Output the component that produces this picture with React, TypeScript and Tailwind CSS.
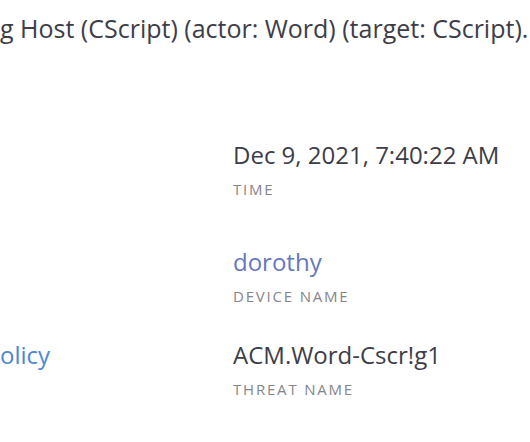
import React from "react";

const font = { fontFamily: '"Open Sans", "Noto Sans", sans-serif' };

function Field({ value, label, link }: { value: string; label: string; link?: boolean }) {
  return (
    <div className="flex flex-col">
      <div className={`text-[24px] leading-[30px] whitespace-nowrap ${link ? "text-[#6478c0]" : "text-[#3d3d48]"}`}>{value}</div>
      <div className="mt-[10px] text-[15px] leading-[18px] tracking-[1.8px] text-[#85858c] uppercase whitespace-nowrap">{label}</div>
    </div>
  );
}

export default function App() {
  return (
    <div className="w-[530px] h-[442px] overflow-hidden bg-white" style={font}>
      <div className="pt-[11px] text-[25px] leading-[34px] whitespace-nowrap text-[#3d3d48]">
        g Host (CScript) (actor: Word) (target: CScript).
      </div>
      <div className="flex flex-col mt-[95px]">
        <div className="flex">
          <div className="w-[233px]" />
          <Field value="Dec 9, 2021, 7:40:22 AM" label="Time" />
        </div>
        <div className="flex mt-[49px]">
          <div className="w-[233px]" />
          <Field value="dorothy" label="Device name" link />
        </div>
        <div className="flex mt-[35px]">
          <div className="w-[233px] text-[24px] leading-[30px] text-[#4d88d0] whitespace-nowrap">olicy</div>
          <Field value="ACM.Word-Cscr!g1" label="Threat name" />
        </div>
      </div>
    </div>
  );
}
